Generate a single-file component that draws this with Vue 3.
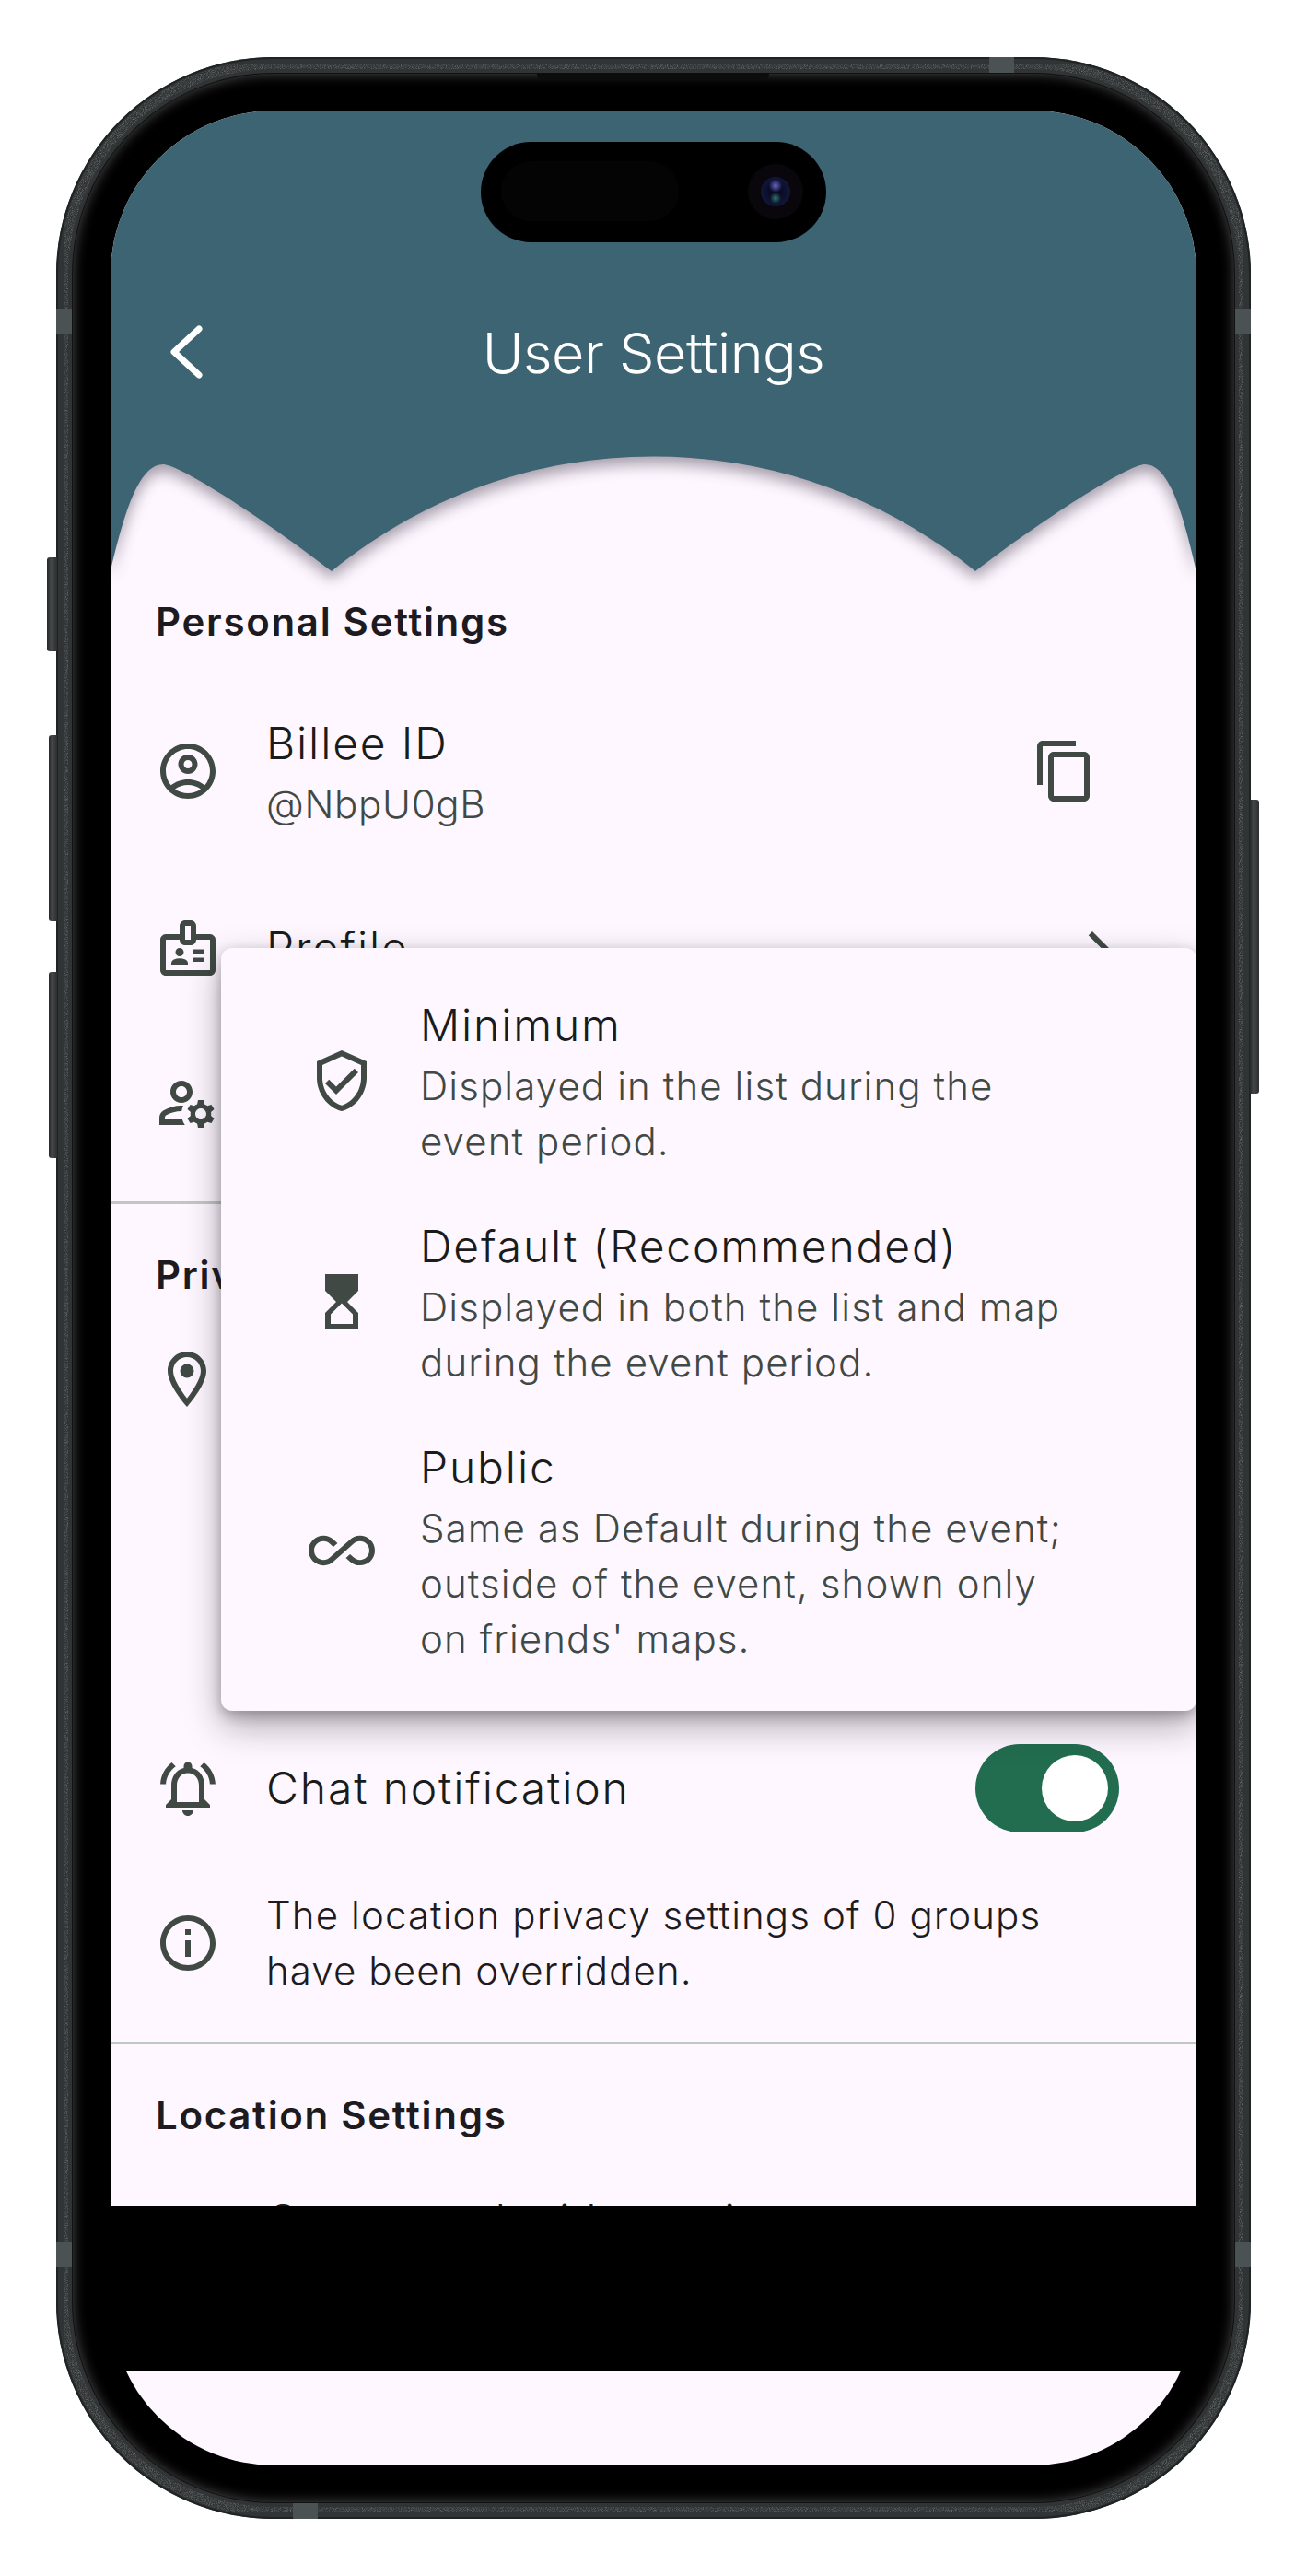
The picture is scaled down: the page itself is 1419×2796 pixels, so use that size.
<template>
  <div class="page">
    <div class="phone">
      <span class="side-btn action"></span>
      <span class="side-btn vol-up"></span>
      <span class="side-btn vol-down"></span>
      <span class="side-btn power"></span>

      <svg class="rim-grain" width="1297" height="2672" viewBox="0 0 1297 2672">
        <filter id="grain" x="0" y="0" width="100%" height="100%">
          <feTurbulence type="fractalNoise" baseFrequency="1.1" numOctaves="2" seed="4" />
          <feColorMatrix values="0 0 0 0 0.55  0 0 0 0 0.58  0 0 0 0 0.58  0 0 0 0.9 -0.38" />
          <feComposite in2="SourceAlpha" operator="in" />
        </filter>
        <rect x="8" y="8" width="1281" height="2656" rx="228" fill="none" stroke="#000" stroke-width="10" filter="url(#grain)" />
      </svg>

      <span class="band top-band"></span>
      <span class="band left-top-band"></span>
      <span class="band right-top-band"></span>
      <span class="band left-bottom-band"></span>
      <span class="band right-bottom-band"></span>
      <span class="band bottom-band"></span>
      <span class="speaker"></span>

      <div class="bezel">
        <div class="screen">
          <div class="island">
            <span class="island-sensor"></span>
            <span class="island-camera"><i class="lens"></i></span>
          </div>

          <div class="app">
            <header class="appbar">
              <svg class="wave" viewBox="0 0 1179 500" width="1179" height="500">
                <path
                  fill="#3d6472"
                  d="M0 0H1179V500C1165 440 1150 384 1123 384C1105 384 1010 445 939 500C840 420 720 375.500 589.500 375.500C459 375.500 339 420 240 500C169 445 75 384 57 384C30 384 14 440 0 500Z"
                />
              </svg>
              <div class="nav">
                <svg class="back" viewBox="0 0 40 60" width="40" height="60">
                  <polyline points="33,6 6,31 33,56" fill="none" stroke="#fff" stroke-width="7" stroke-linecap="round" stroke-linejoin="round" />
                </svg>
                <h1 class="title">User Settings</h1>
              </div>
            </header>

            <section>
              <h2 class="section-title">Personal Settings</h2>
              <div class="row tall">
                <svg class="icon" viewBox="0 0 24 24"><path :d="icons.account" /></svg>
                <div class="row-text">
                  <div class="row-title">Billee ID</div>
                  <div class="row-sub">@NbpU0gB</div>
                </div>
                <svg class="icon copy" viewBox="0 0 24 24"><path :d="icons.copy" /></svg>
              </div>
              <div class="row">
                <svg class="icon" viewBox="0 0 24 24"><path :d="icons.badge" /></svg>
                <div class="row-text"><div class="row-title">Profile</div></div>
                <svg class="icon" viewBox="0 0 24 24"><path :d="icons.chevron" /></svg>
              </div>
              <div class="row">
                <svg class="icon" viewBox="0 0 24 24"><path :d="icons.manage" /></svg>
              </div>
            </section>

            <div class="divider"></div>

            <section>
              <h2 class="section-title">Privacy Settings</h2>
              <div class="row covered">
                <svg class="icon" viewBox="0 0 24 24"><path :d="icons.pin" /></svg>
              </div>
              <div class="row">
                <svg class="icon" viewBox="0 0 24 24"><path :d="icons.bell" /></svg>
                <div class="row-text"><div class="row-title">Chat notification</div></div>
                <div class="switch"><span class="thumb"></span></div>
              </div>
              <div class="row">
                <svg class="icon" viewBox="0 0 24 24"><path :d="icons.info" /></svg>
                <div class="row-text note">The location privacy settings of 0 groups have been overridden.</div>
              </div>
            </section>

            <div class="divider"></div>

            <section>
              <h2 class="section-title">Location Settings</h2>
              <div class="row-title clipped">Connected with service</div>
            </section>

            <div class="menu">
              <div v-for="item in levels" :key="item.title" class="menu-item">
                <svg class="icon" viewBox="0 0 24 24"><path :d="item.icon" /></svg>
                <div class="row-text">
                  <div class="row-title">{{ item.title }}</div>
                  <div class="menu-desc">{{ item.desc }}</div>
                </div>
              </div>
            </div>
          </div>

          <div class="home-bar"></div>
          <div class="bottom-area"></div>
        </div>
      </div>
    </div>
  </div>
</template>

<script setup>
const icons = {
  account:
    'M12 2C6.48 2 2 6.48 2 12s4.48 10 10 10 10-4.48 10-10S17.52 2 12 2zM7.35 18.5C8.66 17.56 10.26 17 12 17s3.34.56 4.65 1.5c-1.31.94-2.91 1.5-4.65 1.5s-3.34-.56-4.65-1.5zm10.79-1.38C16.45 15.8 14.32 15 12 15s-4.45.8-6.14 2.12C4.7 15.73 4 13.95 4 12c0-4.42 3.58-8 8-8s8 3.58 8 8c0 1.95-.7 3.73-1.86 5.12zM12 6c-1.93 0-3.5 1.57-3.5 3.5S10.07 13 12 13s3.5-1.57 3.5-3.5S13.93 6 12 6zm0 5c-.83 0-1.5-.67-1.5-1.5S11.17 8 12 8s1.5.67 1.5 1.5S12.83 11 12 11z',
  copy: 'M16 1H4c-1.1 0-2 .9-2 2v14h2V3h12V1zm3 4H8c-1.1 0-2 .9-2 2v14c0 1.1.9 2 2 2h11c1.1 0 2-.9 2-2V7c0-1.1-.9-2-2-2zm0 16H8V7h11v14z',
  badge:
    'M20 7h-5V4c0-1.1-.9-2-2-2h-2c-1.1 0-2 .9-2 2v3H4c-1.1 0-2 .9-2 2v11c0 1.1.9 2 2 2h16c1.1 0 2-.9 2-2V9c0-1.1-.9-2-2-2zM11 4h2v5h-2V4zm9 16H4V9h5c0 1.1.9 2 2 2h2c1.1 0 2-.9 2-2h5v11zM9 15c.83 0 1.5-.67 1.5-1.5S9.83 12 9 12s-1.5.67-1.5 1.5S8.17 15 9 15zM11.08 16.18C10.44 15.9 9.74 15.75 9 15.75s-1.44.15-2.08.43C6.36 16.42 6 16.96 6 17.57V18h6v-.43c0-.61-.36-1.15-.92-1.39zM18 12.5h-4V14h4v-1.500zM18 15.500h-4V17h4v-1.500z',
  chevron: 'M10 6 8.590 7.410 13.170 12l-4.580 4.590L10 18l6-6z',
  manage:
    'M4 18v-.65c0-.34.16-.66.41-.81C6.100 15.530 8.030 15 10 15c.03 0 .05 0 .08.01.1-.7.3-1.370.59-1.980-.22-.02-.44-.03-.67-.03-2.420 0-4.680.67-6.610 1.820-.88.52-1.390 1.500-1.390 2.530V20h9.260c-.42-.6-.75-1.280-.97-2H4zM10 12c2.210 0 4-1.790 4-4s-1.790-4-4-4-4 1.790-4 4 1.790 4 4 4zm0-6c1.100 0 2 .9 2 2s-.9 2-2 2-2-.9-2-2 .9-2 2-2zM20.750 16c0-.22-.03-.42-.06-.63l1.140-1.010-1-1.730-1.450.49c-.32-.27-.68-.48-1.080-.63L18 11h-2l-.3 1.490c-.4.15-.76.36-1.080.63l-1.450-.49-1 1.730 1.140 1.010c-.03.21-.06.41-.06.63s.03.42.06.63l-1.140 1.010 1 1.730 1.450-.49c.32.27.68.48 1.080.63L16 21h2l.3-1.490c.4-.15.76-.36 1.080-.63l1.450.49 1-1.730-1.140-1.010c.03-.21.06-.41.06-.63zM17 18c-1.100 0-2-.9-2-2s.9-2 2-2 2 .9 2 2-.9 2-2 2z',
  pin: 'M12 2C8.130 2 5 5.130 5 9c0 5.250 7 13 7 13s7-7.750 7-13c0-3.870-3.130-7-7-7zM7 9c0-2.760 2.240-5 5-5s5 2.240 5 5c0 2.880-2.880 7.190-5 9.880C9.920 16.210 7 11.850 7 9zM12 6.500a2.500 2.500 0 1 0 0 5 2.500 2.500 0 1 0 0-5z',
  bell: 'M7.580 4.080 6.150 2.650C3.750 4.480 2.170 7.300 2.030 10.500h2c.15-2.650 1.510-4.970 3.550-6.420zm12.390 6.420h2c-.15-3.200-1.730-6.020-4.120-7.850l-1.420 1.430c2.020 1.450 3.390 3.770 3.540 6.420zM18 11c0-3.070-1.640-5.640-4.500-6.320V4c0-.83-.67-1.500-1.500-1.500s-1.500.67-1.500 1.500v.68C7.630 5.360 6 7.920 6 11v5l-2 2v1h16v-1l-2-2v-5zm-2 6H8v-6c0-2.480 1.510-4.500 4-4.500s4 2.020 4 4.500v6zm-4 5c.14 0 .27-.01.4-.04.65-.14 1.180-.58 1.440-1.180.1-.24.15-.5.15-.78h-4c.01 1.100.9 2 2.010 2z',
  info: 'M11 7h2v2h-2zm0 4h2v6h-2zm1-9C6.480 2 2 6.480 2 12s4.480 10 10 10 10-4.480 10-10S17.520 2 12 2zm0 18c-4.410 0-8-3.590-8-8s3.590-8 8-8 8 3.590 8 8-3.590 8-8 8z'
}

const levels = [
  {
    title: 'Minimum',
    desc: 'Displayed in the list during the event period.',
    icon: 'M12 1L3 5v6c0 5.550 3.840 10.740 9 12 5.160-1.260 9-6.450 9-12V5l-9-4zm7 10c0 4.520-2.980 8.690-7 9.930-4.020-1.240-7-5.410-7-9.930V6.300l7-3.110 7 3.110V11zm-11.590.59L6 13l4 4 8-8-1.410-1.420L10 14.170l-2.590-2.580z'
  },
  {
    title: 'Default (Recommended)',
    desc: 'Displayed in both the list and map during the event period.',
    icon: 'M6 2l.01 6L10 12l-3.990 4.010L6 22h12v-6l-4-4 4-3.990V2H6zm10 14.500V20H8v-3.500l4-4 4 4z'
  },
  {
    title: 'Public',
    desc: "Same as Default during the event; outside of the event, shown only on friends' maps.",
    icon: 'M18.600 6.620c-1.440 0-2.800.56-3.770 1.530L12 10.660 10.480 12h.01L7.800 14.390c-.64.64-1.490.99-2.400.99-1.870 0-3.390-1.510-3.390-3.380S3.530 8.620 5.400 8.620c.91 0 1.760.35 2.440 1.030l1.130 1 1.510-1.340L9.220 8.200C8.200 7.180 6.840 6.620 5.400 6.620 2.420 6.620 0 9.040 0 12s2.420 5.380 5.400 5.380c1.440 0 2.800-.56 3.770-1.530l2.830-2.500.01.01L13.520 12h-.01l2.690-2.390c.64-.64 1.490-.99 2.400-.99 1.870 0 3.390 1.510 3.390 3.380s-1.520 3.380-3.390 3.380c-.9 0-1.760-.35-2.440-1.030l-1.140-1.010-1.510 1.340 1.270 1.120c1.020 1.010 2.370 1.570 3.820 1.570 2.980 0 5.400-2.410 5.400-5.380s-2.420-5.370-5.400-5.370z'
  }
]
</script>

<style>
body {
  background: #fff;
}
</style>

<style scoped>
.page {
  padding: 62px 0 62px 61px;
  font-family: Inter, "Noto Sans", sans-serif;
  color: #1d1b20;
}

.phone {
  position: relative;
  width: 1297px;
  height: 2672px;
  box-sizing: border-box;
  padding: 18px;
  border-radius: 236px;
  background: #303435;
  box-shadow: inset 0 0 0 2px #1e2324;
}

.rim-grain {
  position: absolute;
  left: 0;
  top: 0;
}

.side-btn {
  position: absolute;
  width: 11px;
  background: linear-gradient(90deg, #252728, #46494a 40%, #2c2f30);
  border-radius: 3px 0 0 3px;
}
.action { left: -10px; top: 543px; height: 102px; }
.vol-up { left: -8px; top: 736px; height: 202px; width: 9px; }
.vol-down { left: -8px; top: 993px; height: 202px; width: 9px; }
.power {
  right: -9px;
  top: 806px;
  height: 319px;
  width: 10px;
  border-radius: 0 3px 3px 0;
}

.band {
  position: absolute;
  background: #4b5253;
}
.top-band { left: 1013px; top: 0; width: 27px; height: 18px; }
.left-top-band { left: 0; top: 273px; width: 18px; height: 27px; }
.right-top-band { right: 0; top: 273px; width: 18px; height: 27px; }
.left-bottom-band { left: 0; top: 2372px; width: 18px; height: 27px; }
.right-bottom-band { right: 0; top: 2372px; width: 18px; height: 27px; }
.bottom-band { left: 257px; bottom: 0; width: 27px; height: 18px; }

.speaker {
  position: absolute;
  left: 522px;
  top: 17px;
  width: 252px;
  height: 8px;
  background: #0b0c0c;
  border-radius: 0 0 6px 6px;
  z-index: 2;
}

.bezel {
  position: relative;
  height: 100%;
  box-sizing: border-box;
  padding: 40px 41px;
  border-radius: 218px;
  background: #000;
  box-shadow: 0 0 0 1px #101213, inset 0 0 14px rgba(130, 130, 130, 0.6);
}

.screen {
  position: relative;
  width: 1179px;
  height: 2556px;
  display: flex;
  flex-direction: column;
  overflow: hidden;
  border-radius: 178px;
  background: #000;
}

.island {
  position: absolute;
  z-index: 5;
  left: 402px;
  top: 34px;
  width: 375px;
  height: 109px;
  border-radius: 55px;
  background: #000;
}
.island-sensor {
  position: absolute;
  left: 22px;
  top: 21px;
  width: 193px;
  height: 65px;
  border-radius: 33px;
  background: #040404;
}
.island-camera {
  position: absolute;
  left: 290px;
  top: 24px;
  width: 60px;
  height: 60px;
  border-radius: 50%;
  background: #09060c;
  display: flex;
  align-items: center;
  justify-content: center;
}
.lens {
  width: 32px;
  height: 32px;
  border-radius: 50%;
  background:
    radial-gradient(circle at 50% 72%, #2b7a6a 0, transparent 22%),
    radial-gradient(circle at 50% 30%, #6a66c8 0, transparent 26%),
    radial-gradient(circle, #0a0c25 30%, #11163c 70%, #0b0b1c 100%);
}

.app {
  position: relative;
  height: 2274px;
  flex: none;
  overflow: hidden;
  background: #fef7ff;
}

.appbar {
  position: relative;
  height: 500px;
}
.wave {
  position: absolute;
  left: 0;
  top: 0;
  overflow: visible;
  filter: drop-shadow(0 8px 8px rgba(40, 30, 50, 0.42));
}
.nav {
  position: relative;
  display: flex;
  align-items: center;
  justify-content: center;
  height: 84px;
  padding-top: 221px;
}
.back {
  position: absolute;
  left: 63px;
  top: 231px;
}
.title {
  margin: 0;
  font-size: 61px;
  font-weight: 350;
  line-height: 84px;
  letter-spacing: -0.5px;
  color: #fff;
}

.section-title {
  margin: 0;
  padding: 25px 48px 24px 49px;
  font-size: 42px;
  line-height: 60px;
  font-weight: 600;
  letter-spacing: 1.7px;
}

.row {
  display: flex;
  align-items: center;
  gap: 49px;
  height: 168px;
  padding: 0 71px 0 48px;
}
.row.tall {
  height: 216px;
}
.row.covered {
  height: 419px;
  box-sizing: border-box;
  align-items: flex-start;
  padding-top: 23px;
}

.icon {
  width: 72px;
  height: 72px;
  flex: none;
  fill: #404944;
}
.row > .icon:last-child {
  margin-left: -1px;
}
.icon.copy {
  margin-right: 36px;
}

.row-text {
  flex: 1;
  min-width: 0;
}
.row-title {
  font-size: 48px;
  font-weight: 350;
  line-height: 72px;
  letter-spacing: 1.85px;
  color: #191c1a;
}
.row-sub {
  font-size: 42px;
  font-weight: 350;
  line-height: 60px;
  letter-spacing: 0.7px;
  color: #404944;
}
.note {
  font-size: 42px;
  font-weight: 350;
  line-height: 60px;
  letter-spacing: 1.1px;
  padding-right: 60px;
}

.switch {
  width: 156px;
  height: 96px;
  margin-right: 13px;
  box-sizing: border-box;
  padding: 12px;
  flex: none;
  display: flex;
  justify-content: flex-end;
  border-radius: 48px;
  background: #226d4f;
}
.thumb {
  width: 72px;
  height: 72px;
  border-radius: 50%;
  background: #fff;
}

.divider {
  height: 3px;
  margin: 23px 0 22px;
  background: #c0c9c1;
}

.clipped {
  padding: 24px 48px 0 169px;
  white-space: nowrap;
}

.menu {
  position: absolute;
  left: 120px;
  right: 0;
  top: 909px;
  padding: 24px 0;
  border-radius: 12px;
  background: #fef7ff;
  box-shadow: 0 16px 38px rgba(30, 25, 35, 0.36), 0 5px 14px rgba(30, 25, 35, 0.28);
}
.menu-item {
  display: flex;
  align-items: center;
  gap: 49px;
  padding: 24px 118px 24px 95px;
}
.menu-desc {
  font-size: 42px;
  font-weight: 350;
  line-height: 60px;
  letter-spacing: 1.1px;
  color: #404944;
}

.home-bar {
  flex: none;
  height: 180px;
  background: #000;
}
.bottom-area {
  flex: 1;
  background: #fef7ff;
}
</style>
